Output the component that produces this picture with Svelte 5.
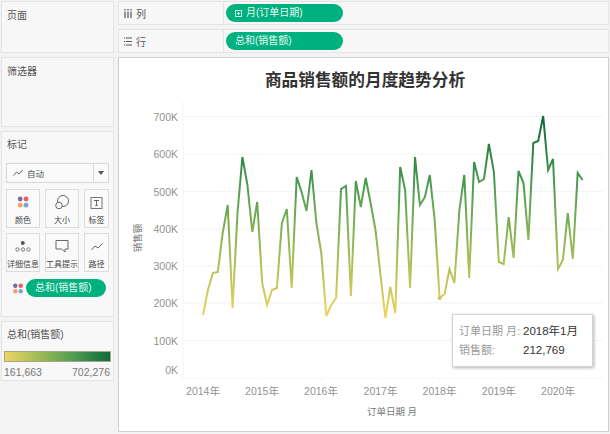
<script>
  const ys = [315,290,273,272,233,205,308,213,157,185,232,202,
    283,305,290,288,223,209,288,177,192,211,170,223,
    253,316,305,298,189,186,296,181,207,178,203,230,
    275,318,287,313,167,190,288,157,205,197,175,220,
    298,294,269,283,210,175,278,162,182,179,144,172,
    262,264,217,258,171,183,240,143,141,116,170,159,
    269,260,213,259,173,180];
  const pts = ys.map((y, i) => `${(203 + i * 4.93).toFixed(1)},${y}`).join(' ');
  const ticks = [['700K',116.7],['600K',154],['500K',191.5],['400K',229],['300K',266],['200K',303],['100K',340.5]];
  const years = [[2014,203],[2015,262],[2016,321],[2017,380.5],[2018,439.5],[2019,498.8],[2020,558]];
  const marks = [
    { id: 'color', label: '颜色' }, { id: 'size', label: '大小' }, { id: 'text', label: '标签' },
    { id: 'detail', label: '详细信息' }, { id: 'tip', label: '工具提示' }, { id: 'path', label: '路径' }
  ];
</script>

<div class="app">
  <aside class="side">
    <section class="card pages"><h3>页面</h3></section>
    <section class="card filters"><h3>筛选器</h3></section>
    <section class="card marks">
      <h3>标记</h3>
      <div class="select">
        <svg width="10" height="8" viewBox="0 0 10 8"><path d="M0.5 6.5 L3.5 3 L6 5 L9.5 1" fill="none" stroke="#666" stroke-width="1"/></svg>
        <span>自动</span>
        <i class="caret"></i>
      </div>
      <div class="grid">
        {#each marks as m}
          <div class="mark">
            <svg width="20" height="20" viewBox="0 0 20 20">
              {#if m.id === 'color'}
                <circle cx="7.2" cy="7" r="2.4" fill="#7d6a9a"/><circle cx="13" cy="7" r="2.4" fill="#e3606b"/>
                <circle cx="7.2" cy="13.2" r="2.4" fill="#f1a06b"/><circle cx="13" cy="13.2" r="2.4" fill="#7ba3d0"/>
              {:else if m.id === 'size'}
                <circle cx="11" cy="9" r="5.5" fill="none" stroke="#666"/><circle cx="7" cy="13.5" r="3.3" fill="#fafafa" stroke="#666"/>
              {:else if m.id === 'text'}
                <rect x="4" y="5.5" width="11" height="11" fill="none" stroke="#777"/><path d="M7 8.5H12M9.5 8.5V13.5M8.3 13.5H10.7" fill="none" stroke="#666"/>
              {:else if m.id === 'detail'}
                <circle cx="9.8" cy="7" r="2" fill="#555"/><circle cx="4.5" cy="13.5" r="1.7" fill="none" stroke="#777"/><circle cx="10" cy="13.5" r="1.7" fill="none" stroke="#777"/><circle cx="15.5" cy="13.5" r="1.7" fill="none" stroke="#777"/>
              {:else if m.id === 'tip'}
                <path d="M4 4.5H16V13H13V16L9.5 13H4Z" fill="none" stroke="#666"/>
              {:else}
                <path d="M4.5 14L8 10L11 12L15.5 7.5" fill="none" stroke="#666"/>
              {/if}
            </svg>
            <span>{m.label}</span>
          </div>
        {/each}
      </div>
      <div class="color-row">
        <svg width="10" height="11" viewBox="0 0 10 11">
          <circle cx="2.3" cy="2.7" r="2.2" fill="#7d6a9a"/><circle cx="7.7" cy="2.7" r="2.2" fill="#e3606b"/>
          <circle cx="2.3" cy="8.3" r="2.2" fill="#f1a06b"/><circle cx="7.7" cy="8.3" r="2.2" fill="#7ba3d0"/>
        </svg>
        <div class="pill small">总和(销售额)</div>
      </div>
    </section>
    <section class="card legend">
      <h3>总和(销售额)</h3>
      <div class="ramp"></div>
      <div class="range"><span>161,663</span><span>702,276</span></div>
    </section>
  </aside>

  <main class="main">
    <div class="shelf">
      <div class="shelf-label">
        <svg width="8" height="9" viewBox="0 0 8 9"><path d="M1 0V1.5M1 2.5V9M4 0V1.5M4 2.5V9M7 0V1.5M7 2.5V9" stroke="#555" stroke-width="1.2"/></svg>
        <span>列</span>
      </div>
      <div class="pill">
        <svg width="7" height="7" viewBox="0 0 7 7"><rect x=".5" y=".5" width="6" height="6" fill="none" stroke="#c8ecdf"/><path d="M2 3.5H5M3.5 2V5" stroke="#c8ecdf"/></svg>
        月(订单日期)
      </div>
    </div>
    <div class="shelf">
      <div class="shelf-label">
        <svg width="8" height="9" viewBox="0 0 8 9"><path d="M0 1H1.2M2 1H8M0 4.5H1.2M2 4.5H8M0 8H1.2M2 8H8" stroke="#555" stroke-width="1.2"/></svg>
        <span>行</span>
      </div>
      <div class="pill">总和(销售额)</div>
    </div>

    <div class="view">
      <svg class="plot" width="489" height="373" viewBox="119 58 489 373">
        <defs>
          <linearGradient id="val" gradientUnits="userSpaceOnUse" x1="0" y1="318" x2="0" y2="116">
            <stop offset="0" stop-color="#f0d45f"/>
            <stop offset="0.33" stop-color="#9dbb55"/>
            <stop offset="0.66" stop-color="#4c9c52"/>
            <stop offset="1" stop-color="#11693a"/>
          </linearGradient>
        </defs>
        <text class="title" x="365" y="86" text-anchor="middle">商品销售额的月度趋势分析</text>
        <line x1="183" y1="102" x2="183" y2="378" class="grid-l"/>
        {#each ticks as [label, y]}
          <line x1="183" x2="603" y1={y} y2={y} class="grid-l"/>
          <text class="tick" x="178" y={y + 4} text-anchor="end">{label}</text>
        {/each}
        <line x1="180" x2="603" y1="378" y2="378" class="zero"/>
        <text class="tick" x="178" y="374" text-anchor="end">0K</text>
        {#each years as [yr, x]}
          <line x1={x} x2={x} y1="378" y2="381" class="grid-l"/>
          <text class="tick" x={x} y="395" text-anchor="middle">{yr}年</text>
        {/each}
        <text class="axis" x="392" y="415" text-anchor="middle">订单日期 月</text>
        <text class="axis" transform="translate(141 238) rotate(-90)" text-anchor="middle">销售额</text>
        <polyline points={pts} fill="none" stroke="url(#val)" stroke-width="2" stroke-linejoin="miter"/>
        <circle cx="439.6" cy="298.3" r="1.8" fill="#c2c453"/>
      </svg>
      <div class="tip">
        <div class="tip-row"><span>订单日期 月:</span><b>2018年1月</b></div>
        <div class="tip-row"><span>销售额:</span><b>212,769</b></div>
      </div>
    </div>
  </main>
</div>

<style>
  :global(body) { margin: 0; background: #f3f3f3; }
  .app {
    width: 610px; height: 434px; overflow: hidden; display: grid; grid-template-columns: 118px 1fr;
    font-family: "Liberation Sans", "Noto Sans CJK SC", sans-serif; color: #555; background: #f3f3f3;
  }
  .side { display: flex; flex-direction: column; gap: 4px; padding: 1px 4px 0 1px; }
  .card { background: #f7f7f7; border: 1px solid #e4e4e4; box-sizing: border-box; flex: none; }
  h3 { margin: 0; font-size: 10px; font-weight: 400; line-height: 14px; color: #555; padding: 7px 0 0 5px; }
  .pages { height: 52px; }
  .filters { height: 70px; }
  .marks { height: 186px; background: #f8f8f8; }
  .marks h3 { padding-top: 6px; }
  .select {
    margin: 11px 4px 0 4px; height: 18px; border: 1px solid #d8d8d8; background: #fafafa; display: flex; align-items: center;
    font-size: 8.5px; gap: 4px; padding-left: 6px; position: relative; color: #555;
  }
  .caret { position: absolute; right: 0; top: 0; bottom: 0; width: 14px; border-left: 1px solid #d8d8d8; }
  .caret::after { content: ""; position: absolute; left: 4px; top: 7px; border: 3px solid transparent; border-top: 4px solid #555; }
  .grid { display: grid; grid-template-columns: 34px 34px 25px; gap: 5px; margin: 6px 0 0 4px; }
  .mark {
    height: 39px; border: 1px solid #dcdcdc; background: #fafafa; box-sizing: border-box; display: flex; flex-direction: column;
    align-items: center; justify-content: flex-end; white-space: nowrap;
  }
  .mark svg { flex: none; margin-bottom: 3px; }
  .mark span { font-size: 8px; line-height: 12px; color: #444; }
  .color-row { display: flex; align-items: center; gap: 3px; margin: 7px 0 0 11px; }
  .pill {
    width: 117px; height: 18px; border-radius: 9px; background: #00b180; color: #e6f7f1; font-size: 10px; line-height: 18px;
    display: flex; align-items: center; gap: 4px; padding-left: 9px; box-sizing: border-box; margin-left: 2px;
  }
  .pill.small { width: 80px; margin-left: 0; }
  .legend { height: 60px; background: #f8f8f8; }
  .legend h3 { padding-top: 6px; }
  .ramp {
    height: 11px; margin: 9px 2px 0 2px; border: 1px solid #a9a58a; box-sizing: border-box;
    background: linear-gradient(90deg, #f0d45f, #9dbb55 33%, #4c9c52 66%, #11693a);
  }
  .range { display: flex; justify-content: space-between; font-size: 10.5px; margin: 3px 3px 0 2px; color: #777; line-height: 14px; }

  .main { display: flex; flex-direction: column; min-width: 0; padding: 1px 1px 0 0; }
  .shelf {
    height: 24px; margin-bottom: 4px; background: #f7f7f7; border: 1px solid #e4e4e4;
    box-sizing: border-box; display: flex; align-items: center; flex: none;
  }
  .shelf-label {
    width: 105px; height: 100%; border-right: 1px solid #e4e4e4; display: flex; align-items: center; gap: 4px;
    padding-left: 5px; box-sizing: border-box; font-size: 10px; color: #555; flex: none;
  }
  .view {
    flex: none; height: 375px; position: relative; background: #fff; border: 1px solid #cfcfcf;
    box-sizing: border-box;
  }
  .plot { display: block; }
  .title { font-family: "Liberation Serif", "Noto Sans CJK SC", serif; font-size: 16.7px; font-weight: 700; fill: #333; }
  .tick { font-size: 10.5px; fill: #929292; }
  .axis { font-size: 9.5px; fill: #777; }
  .grid-l { stroke: #f4f4f4; stroke-width: 1; }
  .zero { stroke: #eee; stroke-dasharray: 1 1; }
  .tip {
    position: absolute; left: 333px; top: 256px; width: 141px; height: 53px; background: #fff; box-sizing: border-box;
    border: 1px solid #d5d5d5; box-shadow: 1px 1px 3px rgba(0,0,0,.3); padding: 7px 6px 0 6px; font-size: 11px;
  }
  .tip-row { display: flex; line-height: 19px; }
  .tip-row span { width: 64px; color: #999; flex: none; white-space: nowrap; }
  .tip-row b { font-weight: 400; color: #333; font-size: 11.5px; white-space: nowrap; }
</style>
